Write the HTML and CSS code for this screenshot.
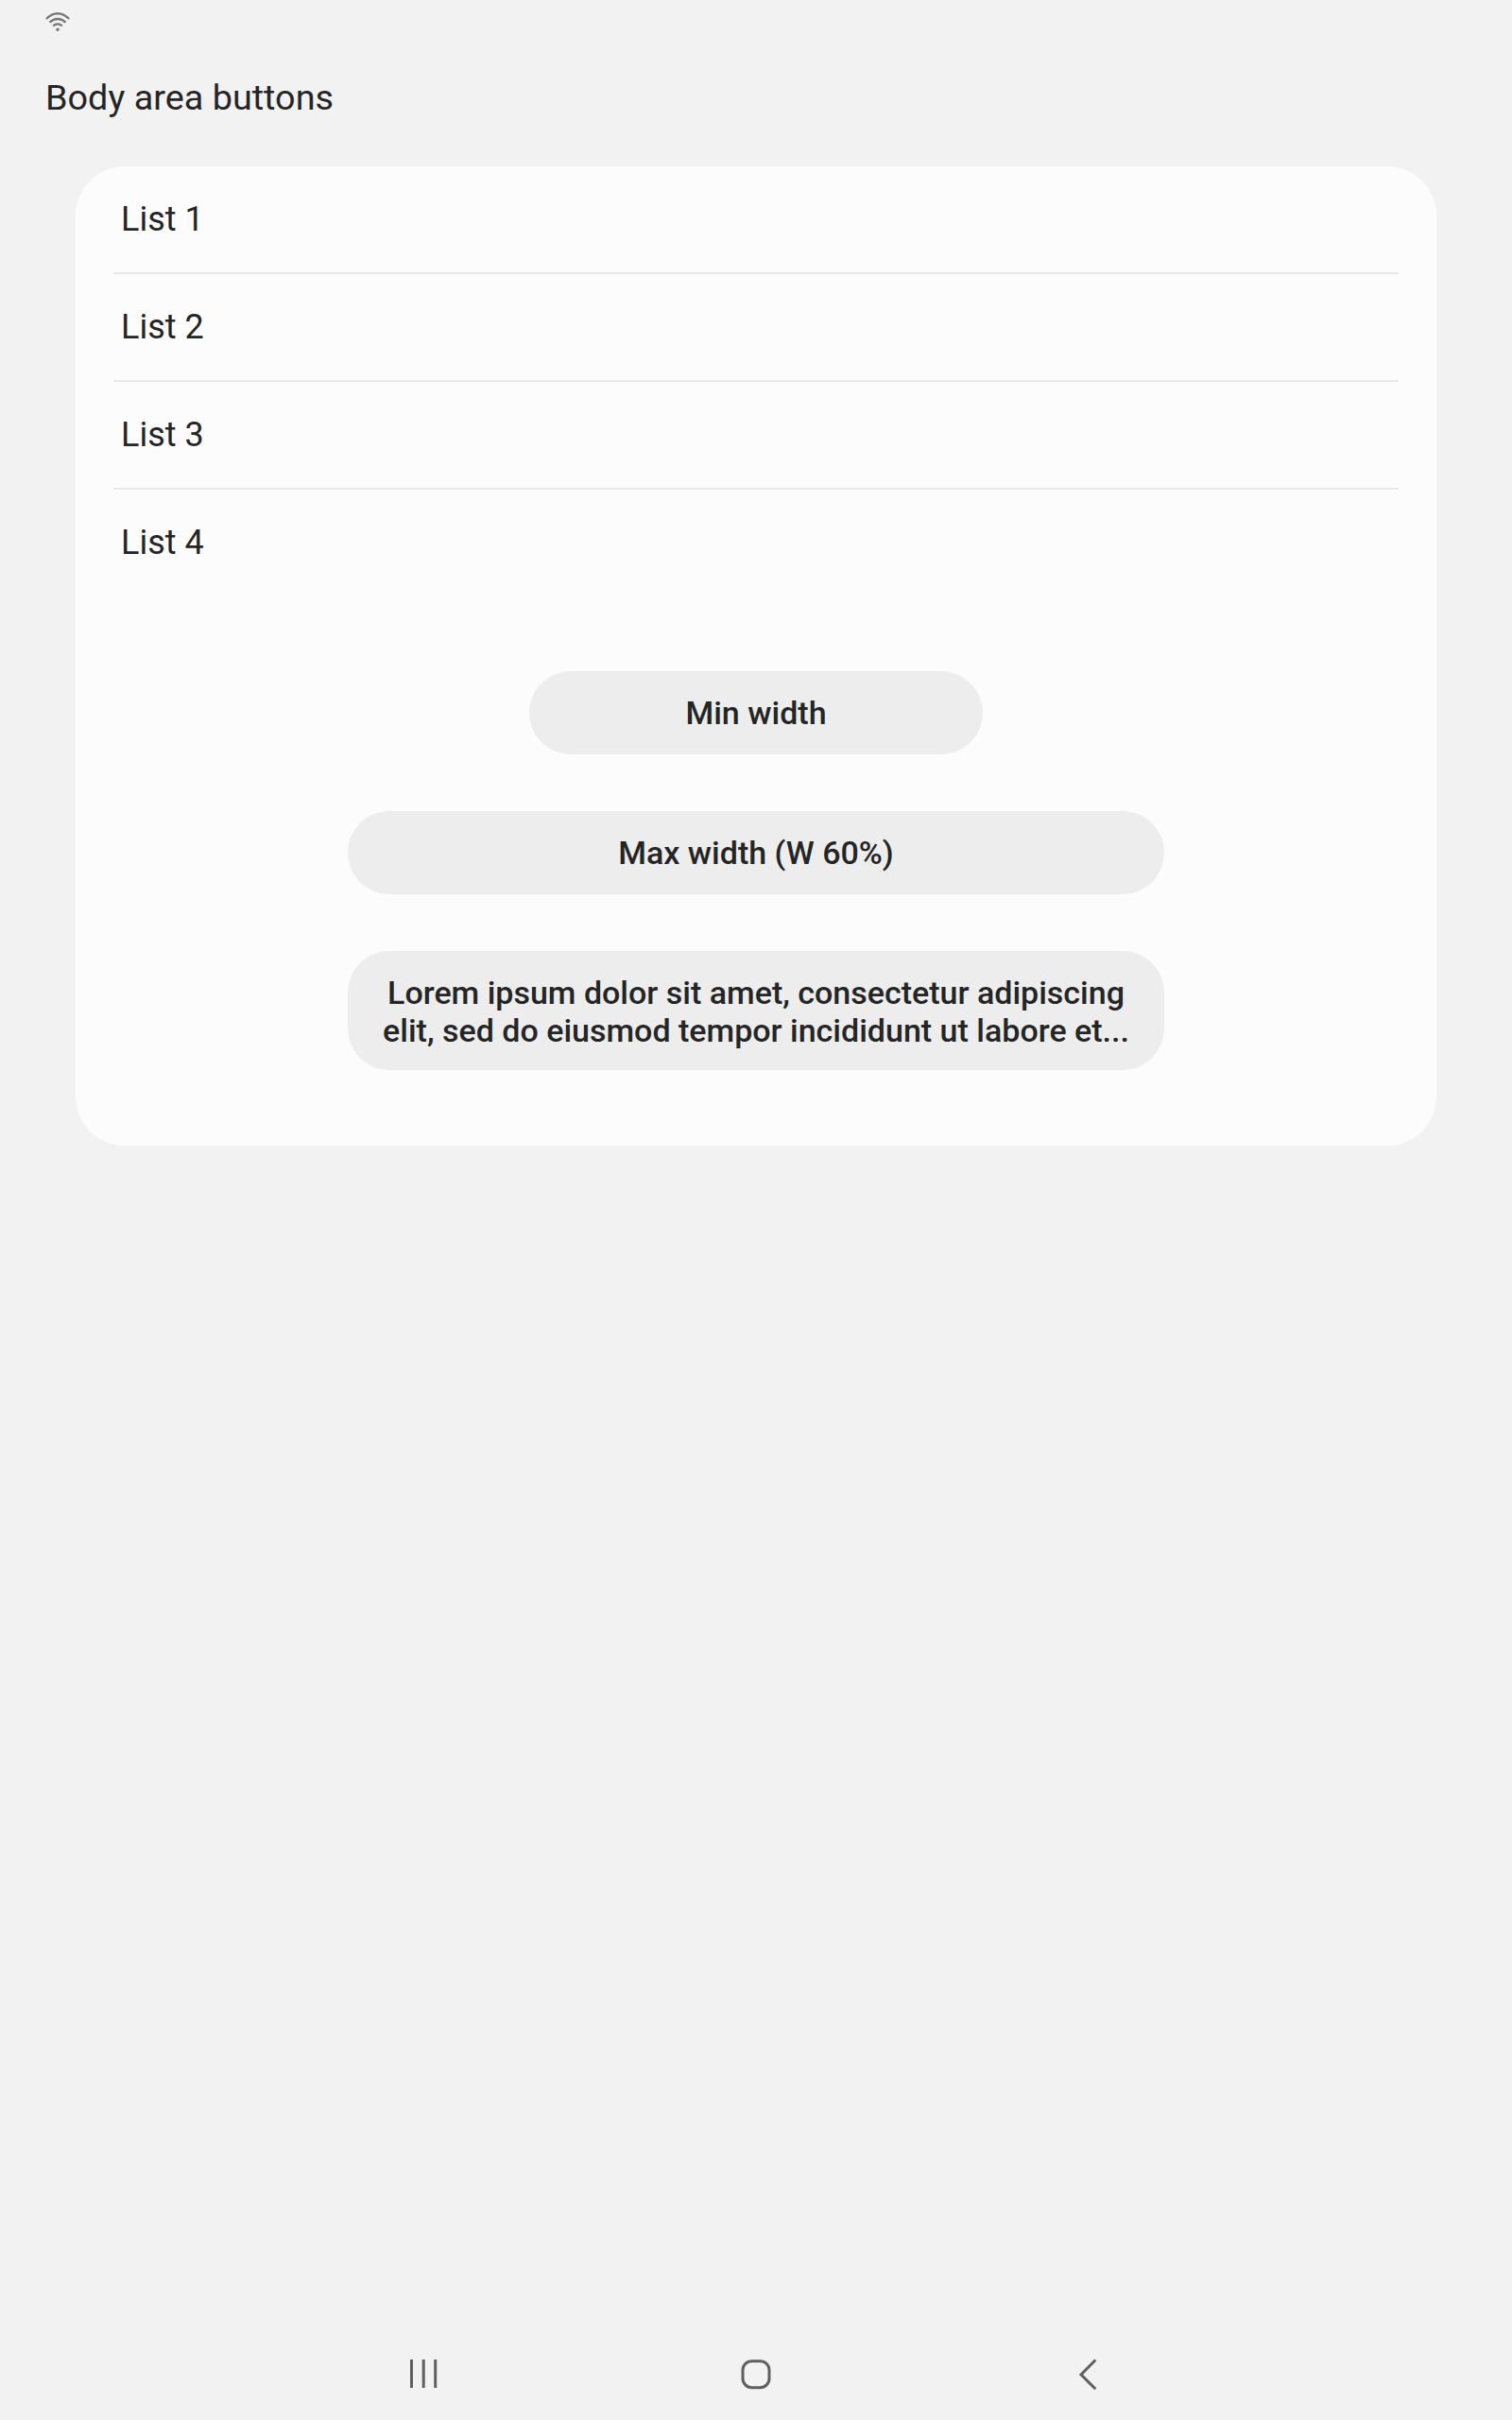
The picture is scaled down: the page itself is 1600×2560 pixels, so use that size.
FILE: index.html
```
<!DOCTYPE html>
<html lang="en">
<head>
<meta charset="utf-8">
<title>Body area buttons</title>
<link rel="stylesheet" href="styles.css">
</head>
<body>
<div class="status">
<svg width="26" height="20" viewBox="0 0 26 20" fill="none" stroke="#777" stroke-width="2.3"><path d="M.8 7Q13-4.500 25.200 7M4.500 10.700Q13 3.300 21.500 10.700M8.200 14.300Q13 10.500 17.800 14.300"/><circle cx="13" cy="18.200" r="1.700" fill="#777" stroke="none"/></svg>
</div>
<h1 class="title">Body area buttons</h1>
<main class="card">
<ul class="list">
<li class="item">List 1</li>
<li class="item">List 2</li>
<li class="item">List 3</li>
<li class="item">List 4</li>
</ul>
<div class="actions">
<button class="btn min">Min width</button>
<button class="btn">Max width (W 60%)</button>
<button class="btn multi">Lorem ipsum dolor sit amet, consectetur adipiscing<br>elit, sed do eiusmod tempor incididunt ut labore et...</button>
</div>
</main>
<nav class="nav">
<svg width="60" height="60" viewBox="0 0 60 60" fill="none" stroke="#606060" stroke-width="3"><path d="M15.500 16v30M28.200 16v30M40.700 16v30"/></svg>
<svg width="60" height="60" viewBox="0 0 60 60" fill="none" stroke="#606060" stroke-width="3"><rect x="16" y="17.700" width="28" height="28" rx="9.500"/></svg>
<svg width="60" height="60" viewBox="0 0 60 60" fill="none" stroke="#606060" stroke-width="3"><path d="M39.300 16.500L24 32L39.300 47.300"/></svg>
</nav>
</body>
</html>
```
FILE: styles.css
```
* { box-sizing: border-box; }
body { margin: 0; height: 2560px; background: #f2f2f2; color: #252525; font-family: Roboto, sans-serif; display: flex; flex-direction: column; }
.status { height: 48px; padding: 13px 0 0 48px; }
.status svg { display: block; }
.title { margin: 0; height: 128px; padding-left: 48px; font-size: 37.8px; font-weight: 400; line-height: 111px; }
.card { margin: 0 80px; height: 1036px; border-radius: 52px; background: #fcfcfc; }
.list { list-style: none; margin: 0; padding: 0 40px; }
.item { height: 114px; line-height: 112px; padding-left: 8px; font-size: 36px; border-bottom: 2px solid #e9e9e9; }
.item:last-child { border-bottom: 0; }
.actions { display: flex; flex-direction: column; align-items: center; gap: 60px; padding-top: 78px; }
.btn { width: 864px; height: 88px; padding: 0; border: 0; border-radius: 44px; background: #ededed; color: #252525; font: 500 34px/40px Roboto, sans-serif; }
.min { width: 480px; }
.multi { height: 126px; padding-top: 2px; }
.nav { margin-top: auto; height: 80px; display: flex; justify-content: center; gap: 290px; }
```
